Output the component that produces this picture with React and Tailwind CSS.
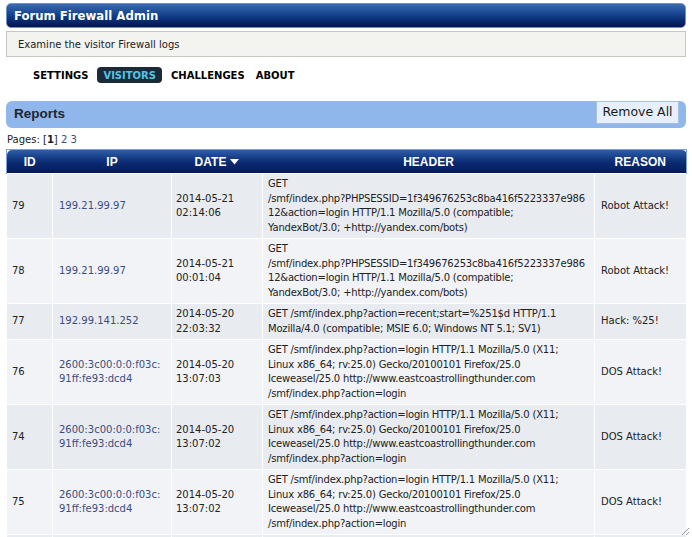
import React from "react";

const rows = [
  {
    id: "79",
    ip: ["199.21.99.97"],
    date: ["2014-05-21", "02:14:06"],
    header: [
      "GET",
      "/smf/index.php?PHPSESSID=1f349676253c8ba416f5223337e986",
      "12&action=login HTTP/1.1 Mozilla/5.0 (compatible;",
      "YandexBot/3.0; +http://yandex.com/bots)",
    ],
    reason: "Robot Attack!",
  },
  {
    id: "78",
    ip: ["199.21.99.97"],
    date: ["2014-05-21", "00:01:04"],
    header: [
      "GET",
      "/smf/index.php?PHPSESSID=1f349676253c8ba416f5223337e986",
      "12&action=login HTTP/1.1 Mozilla/5.0 (compatible;",
      "YandexBot/3.0; +http://yandex.com/bots)",
    ],
    reason: "Robot Attack!",
  },
  {
    id: "77",
    ip: ["192.99.141.252"],
    date: ["2014-05-20", "22:03:32"],
    header: [
      "GET /smf/index.php?action=recent;start=%251$d HTTP/1.1",
      "Mozilla/4.0 (compatible; MSIE 6.0; Windows NT 5.1; SV1)",
    ],
    reason: "Hack: %25!",
  },
  {
    id: "76",
    ip: ["2600:3c00:0:0:f03c:", "91ff:fe93:dcd4"],
    date: ["2014-05-20", "13:07:03"],
    header: [
      "GET /smf/index.php?action=login HTTP/1.1 Mozilla/5.0 (X11;",
      "Linux x86_64; rv:25.0) Gecko/20100101 Firefox/25.0",
      "Iceweasel/25.0 http://www.eastcoastrollingthunder.com",
      "/smf/index.php?action=login",
    ],
    reason: "DOS Attack!",
  },
  {
    id: "74",
    ip: ["2600:3c00:0:0:f03c:", "91ff:fe93:dcd4"],
    date: ["2014-05-20", "13:07:02"],
    header: [
      "GET /smf/index.php?action=login HTTP/1.1 Mozilla/5.0 (X11;",
      "Linux x86_64; rv:25.0) Gecko/20100101 Firefox/25.0",
      "Iceweasel/25.0 http://www.eastcoastrollingthunder.com",
      "/smf/index.php?action=login",
    ],
    reason: "DOS Attack!",
  },
  {
    id: "75",
    ip: ["2600:3c00:0:0:f03c:", "91ff:fe93:dcd4"],
    date: ["2014-05-20", "13:07:02"],
    header: [
      "GET /smf/index.php?action=login HTTP/1.1 Mozilla/5.0 (X11;",
      "Linux x86_64; rv:25.0) Gecko/20100101 Firefox/25.0",
      "Iceweasel/25.0 http://www.eastcoastrollingthunder.com",
      "/smf/index.php?action=login",
    ],
    reason: "DOS Attack!",
  },
  {
    id: "73",
    ip: ["2600:3c00:0:0:f03c:", "91ff:fe93:dcd4"],
    date: ["2014-05-20", "13:07:01"],
    header: [
      "GET /smf/index.php?action=login HTTP/1.1 Mozilla/5.0 (X11;",
      "Linux x86_64; rv:25.0) Gecko/20100101 Firefox/25.0",
    ],
    reason: "DOS Attack!",
  },
];

const Lines = ({ lines }) => lines.map((l, i) => <div key={i}>{l}</div>);

const App = () => {
  return (
    <div className="relative h-[537px] overflow-hidden bg-white px-[6px] pt-[3px] font-['DejaVu_Sans',Verdana,sans-serif] text-[10px] text-[#222]">
      {/* Title bar */}
      <div className="flex h-[25px] items-center rounded-[5px] border border-[#6f8fc8] bg-gradient-to-b from-[#3a6ab0] via-[#123f8a] to-[#04144f] pl-[7px]">
        <span className="font-['DejaVu_Sans_Condensed','DejaVu_Sans',sans-serif] text-[13px] font-bold text-white">
          Forum Firewall Admin
        </span>
      </div>

      {/* Description */}
      <div className="mt-[3px] flex h-[26px] items-center border border-[#c6c6c2] bg-[#f3f3ef] pl-[11px] text-[10px]">
        Examine the visitor Firewall logs
      </div>

      {/* Nav */}
      <div className="mt-[10px] flex h-[16px] items-center gap-[9px] pl-[27px] text-[10px] font-bold text-black">
        <span>SETTINGS</span>
        <span className="flex h-[16px] items-center rounded-[4px] bg-[#1c2a38] px-[6px] text-[#52c4e8]">
          VISITORS
        </span>
        <span>CHALLENGES</span>
        <span className="ml-[2px]">ABOUT</span>
      </div>

      {/* Reports bar */}
      <div className="mt-[18px] flex h-[27px] items-center justify-between rounded-[6px] bg-[#90b7ec] pl-[8px] pr-[7px]">
        <span className="font-['Liberation_Sans',Arial,sans-serif] text-[13.5px] font-bold text-[#1e2630]">
          Reports
        </span>
        <button className="mt-[-4px] flex h-[23px] w-[83px] items-center justify-center border border-[#a9c0dd] bg-[#e6effb] text-[12.5px] text-[#1a1a1a]">
          Remove All
        </button>
      </div>

      {/* Pages */}
      <div className="mt-[3px] h-[18px] pl-[1px] leading-[18px]">
        Pages: [<span className="font-bold">1</span>] <span className="text-[#3b4d80]">2</span>{" "}
        <span className="text-[#3b4d80]">3</span>
      </div>

      {/* Table */}
      <table className="w-[680px] table-fixed border-collapse">
        <colgroup>
          <col className="w-[46px]" />
          <col className="w-[119px]" />
          <col className="w-[91px]" />
          <col className="w-[332px]" />
          <col className="w-[92px]" />
        </colgroup>
        <thead>
          <tr className="h-[24px] bg-gradient-to-b from-[#2f5fa8] via-[#0c2c74] to-[#051856] font-['Liberation_Sans',Arial,sans-serif] text-[12px] font-bold text-white">
            <th className="rounded-tl-[5px] border-t border-l border-[#7f9fd6]">ID</th>
            <th className="border-t border-[#7f9fd6]">IP</th>
            <th className="border-t border-[#7f9fd6]">
              <span className="inline-flex items-center gap-[4px]">
                DATE
                <svg width="9" height="6" viewBox="0 0 9 6">
                  <path d="M0 0 L9 0 L4.5 5.5 Z" fill="white" />
                </svg>
              </span>
            </th>
            <th className="border-t border-[#7f9fd6]">HEADER</th>
            <th className="rounded-tr-[5px] border-t border-r border-[#7f9fd6]">REASON</th>
          </tr>
        </thead>
        <tbody className="leading-[14.5px]">
          {rows.map((r, i) => (
            <tr key={i} className={i % 2 === 0 ? "bg-[#e8ebef]" : "bg-[#f1f3f6]"}>
              <td className="border border-white px-[5px] py-[3px] align-middle">{r.id}</td>
              <td className="border border-white px-[6px] py-[3px] align-middle text-[#3b4d80]">
                <Lines lines={r.ip} />
              </td>
              <td className="border border-white px-[4px] py-[3px] align-middle">
                <Lines lines={r.date} />
              </td>
              <td className="border border-white px-[5px] py-[3px] align-middle whitespace-nowrap tracking-[-0.2px]">
                <Lines lines={r.header} />
              </td>
              <td className="border border-white px-[6px] py-[3px] align-middle">{r.reason}</td>
            </tr>
          ))}
        </tbody>
      </table>

      {/* resize grip */}
      <svg className="absolute bottom-[1px] right-[2px]" width="10" height="10" viewBox="0 0 10 10">
        <path d="M9 2 L2 9 M9 6 L6 9" stroke="#9a9a9a" strokeWidth="1" />
      </svg>
    </div>
  );
};

export default App;
